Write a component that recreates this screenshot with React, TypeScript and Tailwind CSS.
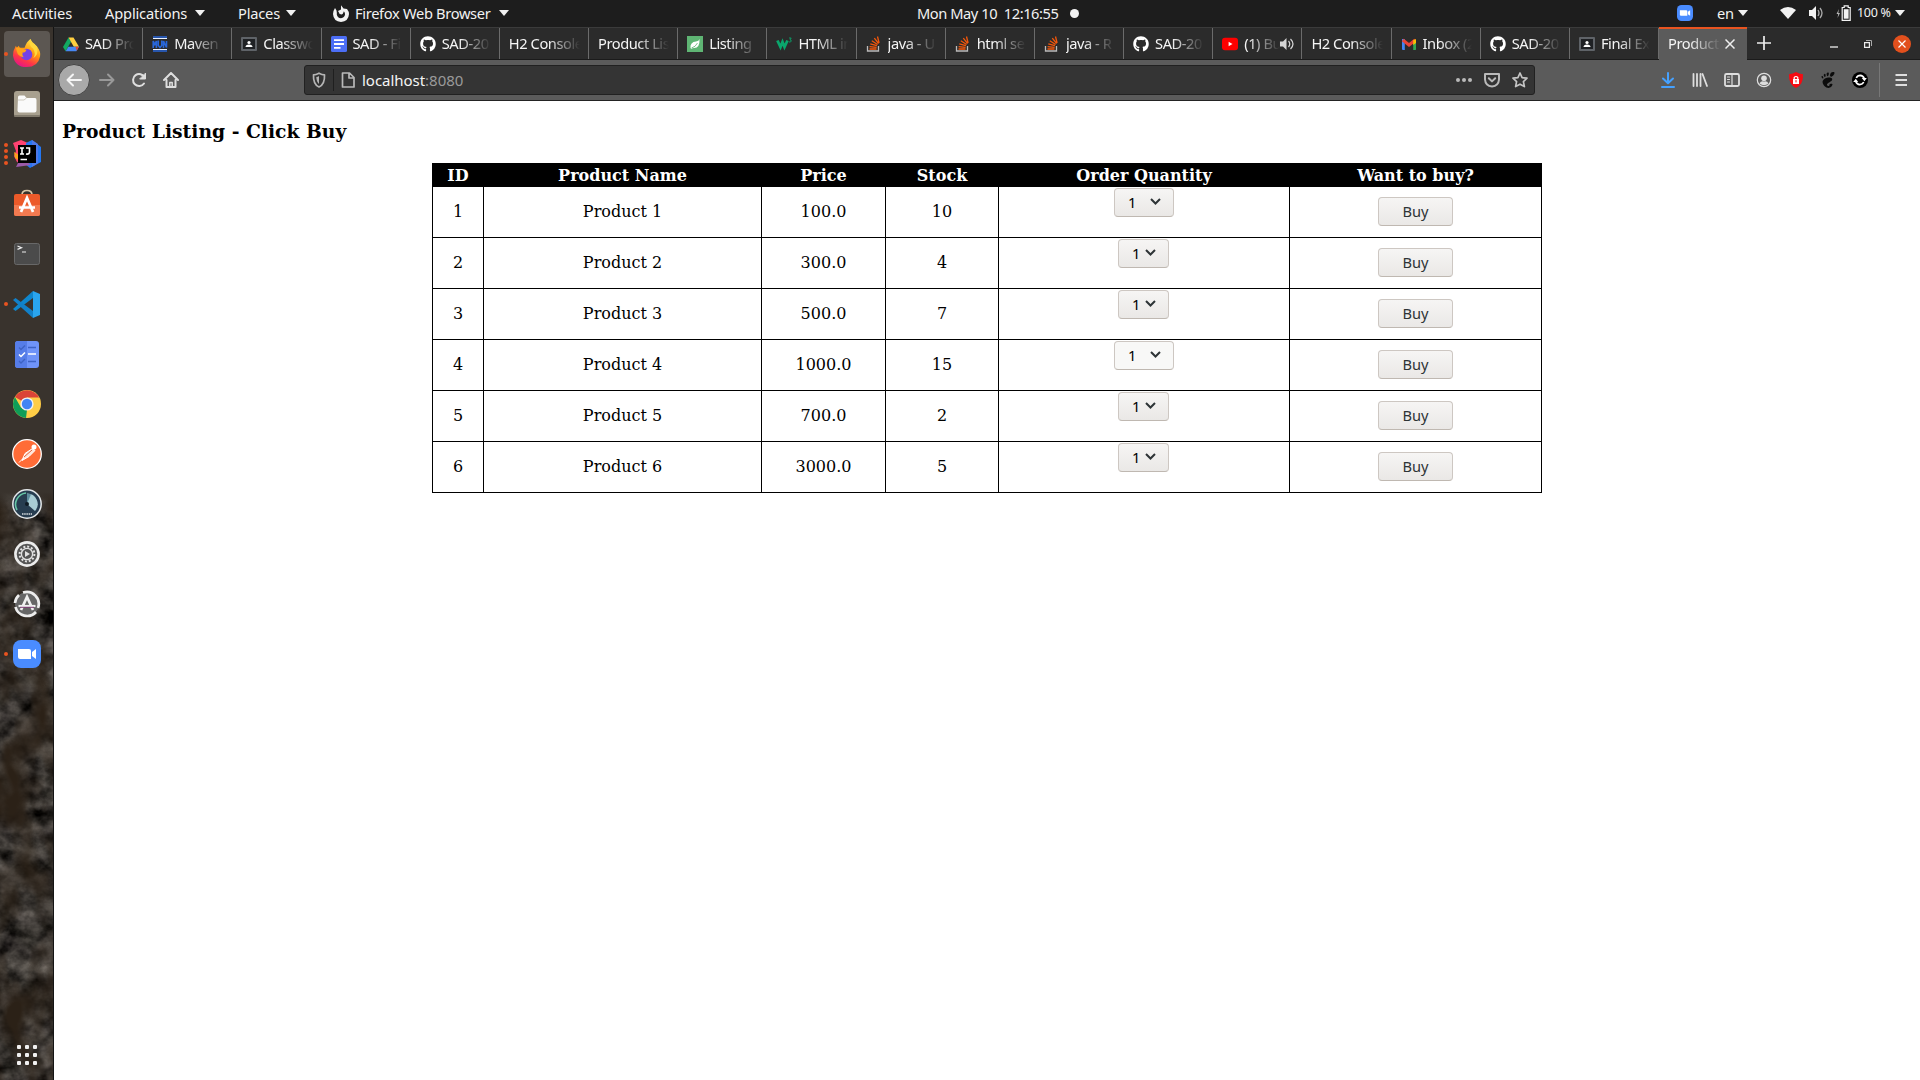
import React from "react";
import { FaGithub } from "react-icons/fa";
import { SiGnome } from "react-icons/si";

type Kids = { children?: React.ReactNode };

const Caret = () => (
  <svg width="10" height="6" viewBox="0 0 10 6" className="shrink-0"><path d="M0 0h10L5 6z" fill="#f2f2f2" /></svg>
);

const ZoomIcon = ({ size }: { size: number }) => (
  <svg width={size} height={size} viewBox="0 0 28 28" className="shrink-0">
    <rect width="28" height="28" rx="8" fill="#4a8cff" />
    <path d="M5 9h11q2 0 2 2v8H7q-2 0-2-2zM19 12l4-3v10l-4-3z" fill="#fff" />
  </svg>
);

function TopBar() {
  return (
    <header className="flex h-[27px] shrink-0 items-center bg-[#1d1d1d] pb-px text-[14.67px] leading-[24px] text-[#f2f2f2] whitespace-nowrap">
      <span className="ml-3 w-[93px] tracking-[-0.1px]">Activities</span>
      <span className="w-[90px] tracking-[-0.17px]">Applications</span>
      <Caret />
      <span className="ml-[33px] w-12 tracking-[-0.2px]">Places</span>
      <Caret />
      <svg width="16" height="17" viewBox="0 0 16 17" className="ml-[37px]">
        <path d="M8 .3l2.500 3.200L14 4q2 2.500 2 5-.5 7.500-8 8Q.5 16.500 0 9q0-3 2-6l1.500 2.500Q4 8 3.800 9.500 4.500 13 8 13.200q3.500-.4 4-3.700.2-2-1.200-3.300L9.500 9 6.500 8.500 5 6l3-1.500z" fill="#f2f2f2" />
        <path d="M7 6l2-2 1.500 3L9 9.500 6.500 9z" fill="#f2f2f2" />
      </svg>
      <span className="ml-[6px] w-36 tracking-[-0.33px]">Firefox Web Browser</span>
      <Caret />
      <span className="ml-[408px] w-[153px] whitespace-pre tracking-[-0.45px]">Mon May 10  12:16:55</span>
      <span className="h-[9px] w-[9px] rounded-full bg-[#f2f2f2]" />
      <span className="ml-auto flex items-center">
        <ZoomIcon size={16} />
        <span className="ml-6 w-[21px] tracking-[-0.2px]">en</span>
        <Caret />
        <svg width="16" height="12" viewBox="0 0 16 12" className="ml-8"><path d="M0 3q8-6 16 0L8 12z" fill="#f2f2f2" /></svg>
        <svg width="15" height="14" viewBox="0 0 15 14" className="ml-[13px]">
          <path d="M0 4h3l4-4v14L3 10H0z" fill="#f2f2f2" />
          <path d="M9 4q2 3 0 6M11 2q4 5 0 10" stroke="#aaa" fill="none" strokeWidth="1.3" />
        </svg>
        <svg width="15" height="16" viewBox="0 0 15 16" className="ml-3">
          <path d="M3 4L.5 9h1.700L1.500 13 4 8H2.300z" fill="#b5b5b5" />
          <path d="M6.200 2.500h2V.8h4v1.700h2v12.800h-8z" fill="none" stroke="#f2f2f2" strokeWidth="1.200" />
          <path d="M7.800 4.200h4.800v9.500H7.800z" fill="#f2f2f2" />
        </svg>
        <span className="ml-[6px] w-[38px] text-[12.5px] tracking-[-0.3px]">100 %</span>
        <Caret />
        <span className="w-[15px]" />
      </span>
    </header>
  );
}

const Drive = () => (
  <svg width="16" height="16" viewBox="0 0 16 16">
    <path d="M5.500 1.500L0 11l2.600 4.200 5.400-9.400z" fill="#11a861" />
    <path d="M5.500 1.500h5l5.500 9.300h-5.200z" fill="#ffcf3f" />
    <path d="M5.300 10.800H16l-2.600 4.400H2.600z" fill="#4688f4" />
    <path d="M12.500 10.800H16l-2.200 4z" fill="#ea4335" />
  </svg>
);
const Mvn = () => (
  <svg width="16" height="16" viewBox="0 0 16 16">
    <path d="M1 2.500h14M1 13.500h14" stroke="#e9f1ff" strokeWidth="1" />
    <path d="M1 1h14M1 15h14" stroke="#2866d8" strokeWidth="1.500" />
    <path d="M1.200 12V5l1.600 3.500L4.400 5v7M6.200 4.500v5L8 11.500l1.800-2v-5M11.500 12V5l3 6.500V5" stroke="#2866d8" strokeWidth="1.600" fill="none" />
  </svg>
);
const Classroom = () => (
  <svg width="16" height="16" viewBox="0 0 16 16">
    <rect y="1" width="16" height="14" rx="1" fill="#5f6368" />
    <rect x="2" y="3" width="12" height="10" fill="#1f2124" />
    <circle cx="8" cy="6.500" r="1.600" fill="#fff" />
    <path d="M4.500 11q0-2.500 3.500-2.500t3.500 2.500z" fill="#fff" />
  </svg>
);
const Docs = () => (
  <svg width="16" height="16" viewBox="0 0 16 16">
    <rect width="16" height="16" rx="1.500" fill="#4c6ef5" />
    <path d="M3 4.200h10M3 8h10M3 11.800h6.500" stroke="#fff" strokeWidth="1.800" />
  </svg>
);
const Leaf = () => (
  <svg width="16" height="16" viewBox="0 0 16 16">
    <rect width="16" height="16" fill="#5fb574" />
    <path d="M12.500 3Q13 12 7 12q-2 0-2.500 1L3.500 12Q3 6 9 5.500 12 5 12.500 3z" fill="#fff" />
    <path d="M4.500 12q4-1 6-5" stroke="#5fb574" fill="none" strokeWidth=".8" />
  </svg>
);
const W3 = () => (
  <svg width="16" height="16" viewBox="0 0 16 16">
    <path d="M1.400 4.500L4.500 11 6.500 6l2 5 3-6.500" fill="none" stroke="#0aa66c" strokeWidth="2.800" />
    <path d="M13 2h2.200l-1.200 1.800q1.500 0 1.200 1.300T13 6" fill="none" stroke="#0aa66c" strokeWidth=".9" />
  </svg>
);
const Stack = () => (
  <svg width="16" height="16" viewBox="0 0 16 16">
    <path d="M1.500 10v5h11v-5" fill="none" stroke="#bcbbbb" strokeWidth="1.300" />
    <path d="M3.500 13h7M3.600 10.600l7 .7M4.300 7.800l6.600 1.900M5.800 4.800l5.800 3.700M8.300 2.200l4.300 5.300M11.500.5l1.600 6.500" stroke="#f4570b" strokeWidth="1.300" />
  </svg>
);
const YouTube = () => (
  <svg width="16" height="16" viewBox="0 0 16 16">
    <rect y="1.800" width="16" height="12.400" rx="3" fill="#f00" />
    <path d="M6.600 5.800v4.500L10.500 8z" fill="#fff" />
  </svg>
);
const Gmail = () => (
  <svg width="16" height="16" viewBox="0 0 16 16">
    <path d="M1 3h2.800v11H1.500L1 13z" fill="#4285f4" />
    <path d="M12.200 4H15v9.500l-.5.500h-2.300z" fill="#34a853" />
    <path d="M1.800 4l6.200 5 6.200-5" stroke="#ea4335" strokeWidth="3" fill="none" />
    <path d="M12.200 4.200L15 3v4l-2.800 2z" fill="#fbbc04" />
  </svg>
);
const Git = () => <FaGithub size={16} color="#fff" />;

const Speaker = () => (
  <svg width="14" height="14" viewBox="0 0 14 14">
    <path d="M0 4.500h3L6.500 1v12L3 9.500H0z" fill="#d5d5d5" />
    <path d="M8.500 4q2.500 3 0 6M10.500 2q5 5 0 10" stroke="#d5d5d5" fill="none" strokeWidth="1.200" />
  </svg>
);

const tabs: { icon?: React.FC; title: string; audio?: boolean }[] = [
  { icon: Drive, title: "SAD Pro" },
  { icon: Mvn, title: "Maven" },
  { icon: Classroom, title: "Classwo" },
  { icon: Docs, title: "SAD - Fi" },
  { icon: Git, title: "SAD-20" },
  { title: "H2 Console" },
  { title: "Product List" },
  { icon: Leaf, title: "Listing" },
  { icon: W3, title: "HTML in" },
  { icon: Stack, title: "java - U" },
  { icon: Stack, title: "html sel" },
  { icon: Stack, title: "java - R" },
  { icon: Git, title: "SAD-20" },
  { icon: YouTube, title: "(1) Bu", audio: true },
  { title: "H2 Console" },
  { icon: Gmail, title: "Inbox (2" },
  { icon: Git, title: "SAD-20" },
  { icon: Classroom, title: "Final Ex" },
];

const fade = "min-w-0 overflow-hidden whitespace-nowrap [mask-image:linear-gradient(to_right,#000_calc(100%_-_32px),transparent)]";

function TabStrip() {
  return (
    <div className="flex h-[33px] shrink-0 items-stretch bg-[#2b2b2b] text-[14.67px] tracking-[-0.45px] text-[#f5f5f5]">
      <div className="flex w-[1605px] shrink-0 border-t border-b border-t-[#3b3b3b] border-b-[#1b1b1b]">
        {tabs.map((t, i) => {
          const Icon = t.icon;
          return (
            <div key={i} className="flex min-w-0 flex-1 basis-0 items-center border-r border-[#6b6b6b] pl-[9px] pr-[8px]">
              {Icon && <span className="mr-[6px] flex h-4 w-4 shrink-0 items-center"><Icon /></span>}
              <span className={`${fade} flex-1 pb-[2px] leading-[28px]`}>{t.title}</span>
              {t.audio && <span className="-mr-px shrink-0"><Speaker /></span>}
            </div>
          );
        })}
      </div>
      <div className="flex w-[88px] shrink-0 items-center border-t-2 border-[#e95420] bg-[#5b5b5b] pb-px pl-[9px]">
        <span className={`${fade} w-[53px] pb-[2px] leading-[28px]`}>Product L</span>
        <svg width="10" height="10" viewBox="0 0 10 10" className="ml-[4px]"><path d="M.5.5l9 9M9.500.5l-9 9" stroke="#eee" strokeWidth="1.500" /></svg>
      </div>
      <div className="flex flex-1 items-center border-t border-b border-t-[#3b3b3b] border-b-[#1b1b1b]">
        <svg width="14" height="14" viewBox="0 0 14 14" className="ml-[10px] -mt-px"><path d="M7 0v14M0 7h14" stroke="#eee" strokeWidth="1.700" /></svg>
        <svg width="8" height="8" viewBox="0 0 8 8" className="ml-[59px]"><path d="M0 7h8" stroke="#eee" strokeWidth="1.300" /></svg>
        <svg width="8" height="8" viewBox="0 0 8 8" className="ml-[26px]">
          <path d="M.6 2.600h4.800v4.800H.6z" fill="none" stroke="#eee" strokeWidth="1.200" /><path d="M2 .5h5.500V6" fill="none" stroke="#aaa" />
        </svg>
        <span className="ml-[21px] flex h-[18px] w-[18px] items-center justify-center rounded-full bg-[#e2501d]">
          <svg width="8" height="8" viewBox="0 0 8 8"><path d="M.5.5l7 7M7.500.5l-7 7" stroke="#fff" strokeWidth="1.200" /></svg>
        </span>
      </div>
    </div>
  );
}

const Slot = ({ children }: Kids) => <span className="flex w-8 shrink-0 items-center justify-center">{children}</span>;

const Ico = ({ children, color = "#dedede" }: Kids & { color?: string }) => (
  <svg width="16" height="16" viewBox="0 0 16 16" fill="none" stroke={color} strokeWidth="2" strokeLinecap="round" strokeLinejoin="round" className="shrink-0">
    {children}
  </svg>
);

function NavBar() {
  return (
    <div className="flex h-[41px] shrink-0 items-center border-b border-[#232323] bg-[#5b5b5b]">
      <span className="ml-1 mr-px flex h-8 w-8 shrink-0 items-center justify-center rounded-full border border-[#444] bg-[#a9a9a9]">
        <Ico color="#f5f5f5"><path d="M15 8H1.500M7 2.500L1.500 8 7 13.500" /></Ico>
      </span>
      <Slot><Ico color="#999"><path d="M1 8h13.500M9 2.500L14.500 8 9 13.500" /></Ico></Slot>
      <Slot><Ico><path d="M13 11.500A6 6 0 1 1 13.500 5.500" /><path d="M14.500 1.500V7H9z" fill="#dedede" strokeWidth="1" /></Ico></Slot>
      <Slot><Ico><path d="M1 8l7-7 7 7M3.500 8v7h9V8" /><path d="M6.800 14.500v-4h2.400v4" strokeWidth="1.500" /></Ico></Slot>
      <div className="ml-[117px] flex h-[30px] w-[1231px] shrink-0 items-center rounded-[3px] border border-[#212121] bg-[#343434]">
        <span className="ml-[6px]"><Ico color="#b5b5b5"><path d="M8 1.200Q5 2.800 2.500 2.800 2 12.500 8 15 14 12.500 13.500 2.800 11 2.800 8 1.200z" strokeWidth="1.700" /><path d="M8 4v8Q5.500 10 5.300 5 7 5 8 4z" fill="#b5b5b5" stroke="none" /></Ico></span>
        <span className="ml-[6px] h-[22px] w-px bg-[#1f1f1f]" />
        <span className="ml-[6px]"><Ico color="#b9b9b9"><path d="M2.500 1h7L14 5.500V15H2.500zM9 1v5h5" strokeWidth="1.700" /></Ico></span>
        <span className="ml-[6px] text-[15px] leading-[26px] tracking-[-0.03px] text-[#f5f5f5]">localhost<span className="text-[#9a9a9a]">:8080</span></span>
        <span className="ml-auto flex items-center gap-3 pr-[6px]">
          <Ico color="#b9b9b9"><g fill="#b9b9b9" stroke="none"><circle cx="2" cy="8" r="2" /><circle cx="8" cy="8" r="2" /><circle cx="14" cy="8" r="2" /></g></Ico>
          <Ico color="#b9b9b9"><path d="M1 2h14v5.500Q14.500 14 8 14.500 1.500 14 1 7.500zM4.800 6.200L8 9.400l3.200-3.200" /></Ico>
          <Ico color="#c5c5c5"><path d="M8 1l2.100 4.600 4.900.6-3.600 3.400 1 5L8 12.200l-4.400 2.400 1-5L1 6.200l4.900-.6z" strokeWidth="1.700" /></Ico>
        </span>
      </div>
      <span className="flex-1" />
      <Slot><Ico color="#45a1ff"><path d="M8 1v10M3 6.500L8 11.300l5-4.800M2 15h12" /></Ico></Slot>
      <Slot><Ico><path d="M1.500 2v12M5 2v12M8.500 2v12M10.500 2l4.500 12" strokeWidth="1.800" /></Ico></Slot>
      <Slot><Ico><rect x="1" y="2" width="14" height="12" rx="1.500" strokeWidth="1.800" /><path d="M8 2v12M3.500 5h2M3.500 7.500h2M3.500 10h2" strokeWidth="1.200" /></Ico></Slot>
      <Slot><Ico><circle cx="8" cy="8" r="6.700" strokeWidth="1.200" /><circle cx="8" cy="6.300" r="2.800" fill="#dedede" stroke="none" /><path d="M3.500 11.500Q5 8.500 8 9.500q3-1 4.500 2Q8 15 3.500 11.500z" fill="#dedede" stroke="none" /></Ico></Slot>
      <Slot><Ico><path d="M8 0Q11 2 15 2.200 15.500 12.500 8 16 .5 12.500 1 2.200 5 2 8 0z" fill="#f50b12" stroke="none" /><rect x="5" y="7" width="6" height="5" fill="#fff" stroke="none" /><path d="M6.200 7V5.500q1.800-2 3.600 0V7" stroke="#fff" strokeWidth="1.200" /><path d="M8 8.500v1.500" stroke="#f50b12" strokeWidth="1" /></Ico></Slot>
      <Slot><SiGnome size={16} color="#0c0c0c" /></Slot>
      <Slot><Ico color="#fff"><circle cx="8" cy="8" r="8" fill="#000" stroke="none" /><path d="M4.300 6Q5.500 3.400 8.300 3.400q2.700.1 3.900 3M11.700 10Q10.500 12.600 7.700 12.600 5 12.500 3.800 9.600" strokeWidth="1.600" strokeLinecap="butt" /><path d="M9.800 6h5l-2.400 3.200zM1.200 10h5L3.800 6.800z" fill="#fff" stroke="none" /></Ico></Slot>
      <span className="ml-[3px] h-[34px] w-px bg-[#777]" />
      <span className="ml-[13px] mr-[11px]"><Ico><path d="M2.500 3h11.500M2.500 8h11.500M2.500 13h11.500" strokeLinecap="butt" /></Ico></span>
    </div>
  );
}

const FirefoxLogo = () => (
  <svg width="29" height="29" viewBox="0 0 30 30">
    <defs>
      <linearGradient id="ff" x1=".8" y1="0" x2=".3" y2="1"><stop offset="0" stopColor="#fff44f" /><stop offset=".45" stopColor="#ff980e" /><stop offset=".75" stopColor="#ff3647" /><stop offset="1" stopColor="#e31587" /></linearGradient>
    </defs>
    <path d="M19 0q2 4 5 6l2 2q4 5 3 10-2 11-14 11T1 17q0-5 3-10l1 2 2-2 1 2h5Q15 3 19 0z" fill="url(#ff)" />
    <circle cx="15" cy="16" r="6" fill="#7542e5" />
    <path d="M4 9q4-1 6 1l5 1q-1 3-4 3-1 3 1 5-6-1-7-6z" fill="#ffa41a" />
    <path d="M19 0q-3 6 3 10 3 5 0 10 6-4 4-12l-3-3Q20 4 19 0z" fill="#ffd83d" />
  </svg>
);
const Files = () => (
  <svg width="26" height="26" viewBox="0 0 26 26"><rect width="26" height="26" rx="3" fill="#a8a08f" /><rect y="24" width="26" height="2" rx="1" fill="#817a6c" /><path d="M4 6q0-1.500 1.500-1.500h5l2 2.500H21q1.500 0 1.500 2v10.500q0 2-2 2h-15q-2 0-2-2z" fill="#fafafa" /><path d="M4 9h6l2.500-2" stroke="#d0ccc2" fill="none" /></svg>
);
const IntelliJ = () => (
  <svg width="28" height="28" viewBox="0 0 28 28">
    <path d="M0 3L8 0l7 3 3 12-9 9-5-2-3-6 2-5z" fill="#ff4271" /><path d="M1 12l5 3 1 6-5-3z" fill="#f9a11c" />
    <path d="M13 3l6-3 9 7v15l-11 6-5-4z" fill="#2477f2" /><path d="M19 0l6 4v19l-6 4z" fill="#4d78e8" /><path d="M3 27l5-10 10 8z" fill="#9b5aa8" />
    <rect x="5" y="5" width="18" height="18" fill="#000" />
    <path d="M7 8h4M9 8v6M7 14h4M13 8h3.500v4.500q-.5 2-3.500 1.500M7.500 19.500h6.500" stroke="#fff" strokeWidth="1.600" fill="none" />
  </svg>
);
const Store = () => (
  <svg width="28" height="28" viewBox="0 0 28 28" className="-mt-[3px]">
    <path d="M9 6q0-4.500 5-4.500T19 6" stroke="#d9c6a6" strokeWidth="1.700" fill="none" /><rect x="1" y="5" width="26" height="22" rx="2" fill="#ec5a29" /><path d="M1 16h26v9q0 2-2 2H3q-2 0-2-2z" fill="#f27a50" />
    <path d="M8 23l6-14 6 14M6 18.500h16" stroke="#fff" strokeWidth="2.700" fill="none" />
  </svg>
);
const Terminal = () => (
  <svg width="26" height="22" viewBox="0 0 26 22"><rect x=".5" y=".5" width="25" height="21" rx="2" fill="#4b4b4b" stroke="#686868" /><path d="M3.500 3l4 1.700-4 1.700M8 9h4" stroke="#eee" fill="none" strokeWidth="1.200" /></svg>
);
const VsCode = () => (
  <svg width="27" height="27" viewBox="0 0 27 27"><path d="M0 18l2.500 2L20 7V0z" fill="#0f86cc" /><path d="M20 0l7 3v21l-7 3z" fill="#2aa5ee" /><path d="M0 9l2.500-2L20 20v7z" fill="#1280c8" /></svg>
);
const Todo = () => (
  <svg width="24" height="27" viewBox="0 0 24 27"><rect width="24" height="27" rx="3" fill="#6f93f8" /><path d="M3 0h9v27H3q-3 0-3-3V3q0-3 3-3z" fill="#567de8" /><path d="M4 6.500l2 2 4-4M13 6.500h8M4 20l2 2 4-4M13 20.500h8" stroke="#3d62c4" strokeWidth="1.300" fill="none" /><path d="M4 13.500l2 2 4-4M13 13h8" stroke="#fff" strokeWidth="1.500" fill="none" /></svg>
);
const Chrome = () => (
  <svg width="28" height="28" viewBox="0 0 28 28"><circle cx="14" cy="14" r="14" fill="#ffcd46" /><path d="M14 14L1.900 7A14 14 0 0 1 26.100 7.500H14z" fill="#db4437" /><path d="M1.900 7l6 10.500L14 20l-1 8A14 14 0 0 1 1.900 7z" fill="#0f9d58" /><circle cx="14" cy="14" r="6.600" fill="#f1f1f1" /><circle cx="14" cy="14" r="5.200" fill="#4285f4" /></svg>
);
const Postman = () => (
  <svg width="30" height="30" viewBox="0 0 30 30"><circle cx="15" cy="15" r="14.300" fill="#ff6c37" stroke="#fff" strokeWidth="1.300" /><circle cx="22" cy="8" r="2.500" fill="#fff" /><path d="M20.500 9.500l2.500 2-6 6-7 4 3-7zM7 23.500l4-4" stroke="#fff" fill="#ffe3d8" strokeWidth="1" /><path d="M12 18l8-7" stroke="#e0623a" /></svg>
);
const Gauge = () => (
  <svg width="30" height="30" viewBox="0 0 30 30"><circle cx="15" cy="15" r="14.200" fill="#273d50" stroke="#e4e8ea" strokeWidth="1.500" /><path d="M5 21A11.500 11.500 0 0 1 14 4" stroke="#66c5a5" strokeWidth="1.600" fill="none" /><path d="M15 15V4.500A10.500 10.500 0 0 1 23 22z" fill="#a9cdd4" /><path d="M15 15V4.500l4 .8z" fill="#5c8c9c" /><circle cx="15" cy="15" r="2" fill="#0e1a24" /><path d="M10 25h10" stroke="#d5dadd" strokeWidth="1.300" strokeDasharray="1.500 .7" /></svg>
);
const Gear = () => (
  <svg width="26" height="26" viewBox="0 0 26 26"><circle cx="13" cy="13" r="11.600" fill="#555" stroke="#ececec" strokeWidth="2.600" /><circle cx="13" cy="13" r="7.400" stroke="#e2e2e2" strokeWidth="2" strokeDasharray="2 1.870" fill="none" /><circle cx="13" cy="13" r="5.600" stroke="#e2e2e2" strokeWidth="1.400" fill="none" /><path d="M11 10l5 3-5 3z" fill="#e2e2e2" /></svg>
);
const Updater = () => (
  <svg width="28" height="28" viewBox="0 0 28 28"><circle cx="14" cy="14" r="12" fill="#666" /><path d="M10 2.500A12 12 0 0 1 25 18M23 22A12 12 0 0 1 2.500 17M2 13A12 12 0 0 1 6 5" stroke="#ededed" strokeWidth="2.700" fill="none" /><path d="M8 20l6-13 6 13" stroke="#f0f0f0" strokeWidth="2.700" fill="none" /><path d="M5.500 16h17" stroke="#f0f0f0" strokeWidth="2.200" /><path d="M7 17.300h14" stroke="#7d3a72" /></svg>
);

const launchers: { icon: React.ReactNode; dots?: number }[] = [
  { icon: <FirefoxLogo />, dots: 1 },
  { icon: <Files /> },
  { icon: <IntelliJ />, dots: 4 },
  { icon: <Store /> },
  { icon: <Terminal /> },
  { icon: <VsCode />, dots: 1 },
  { icon: <Todo /> },
  { icon: <Chrome /> },
  { icon: <Postman /> },
  { icon: <Gauge /> },
  { icon: <Gear /> },
  { icon: <Updater /> },
  { icon: <ZoomIcon size={28} />, dots: 1 },
];

function Dock() {
  return (
    <aside className="relative flex w-[54px] shrink-0 flex-col overflow-hidden border-r border-[#141414] bg-[#39332d] pt-[2px]">
      <svg width="54" height="588" className="absolute bottom-0 left-0">
        <defs>
          <filter id="rock" x="0" y="0" width="100%" height="100%" colorInterpolationFilters="sRGB">
            <feTurbulence type="fractalNoise" baseFrequency=".05 .06" numOctaves="4" seed="8" />
            <feColorMatrix values=".55 .3 0 0 -.2  .53 .28 0 0 -.195  .5 .28 0 0 -.195  0 0 0 0 1" />
          </filter>
          <filter id="moss" x="0" y="0" width="100%" height="100%" colorInterpolationFilters="sRGB">
            <feTurbulence type="fractalNoise" baseFrequency=".03 .015" numOctaves="3" seed="21" />
            <feColorMatrix values="0 0 0 0 .17  0 0 0 0 .13  0 0 0 0 .09  3 0 0 0 -1.2" />
          </filter>
          <linearGradient id="shade" x1="0" y1="0" x2="0" y2="1">
            <stop offset="0" stopColor="#39332d" /><stop offset=".03" stopColor="#39332d" stopOpacity="0" />
          </linearGradient>
        </defs>
        <rect width="54" height="588" filter="url(#rock)" />
        <rect width="54" height="588" filter="url(#moss)" />
        <rect width="54" height="588" fill="url(#shade)" />
      </svg>
      {launchers.map((l, i) => (
        <div key={i} className="relative flex h-[50px] shrink-0 items-center justify-center">
          <span className={i === 0 ? "flex h-[46px] w-[46px] items-center justify-center rounded-[4px] bg-[#5c5752] pb-[2px]" : "flex h-[46px] w-[46px] items-center justify-center"}>{l.icon}</span>
          {l.dots && (
            <span className="absolute left-1 top-0 flex h-full flex-col items-center justify-center gap-[2px]">
              {Array.from({ length: l.dots }, (_, k) => <span key={k} className="h-1 w-1 rounded-full bg-[#e95420]" />)}
            </span>
          )}
        </div>
      ))}
      <div className="relative mt-auto mb-[15px] ml-[17px] grid w-5 grid-cols-3 gap-[4px]">
        {Array.from({ length: 9 }, (_, k) => <span key={k} className="h-1 w-1 rounded-[1px] bg-[#f0f0f0]" />)}
      </div>
    </aside>
  );
}

const products = [
  { id: 1, price: "100.0", stock: 10 },
  { id: 2, price: "300.0", stock: 4 },
  { id: 3, price: "500.0", stock: 7 },
  { id: 4, price: "1000.0", stock: 15 },
  { id: 5, price: "700.0", stock: 2 },
  { id: 6, price: "3000.0", stock: 5 },
];

const cols = "grid grid-cols-[51px_278px_124px_113px_291px_252px]";
const cell = "flex items-center justify-center border-r border-b border-black";

function Page() {
  return (
    <main className="flex-1 bg-white font-['DejaVu_Serif',serif] text-base text-black">
      <h3 className="ml-2 pt-[19px] text-[18.72px] font-bold leading-[22px] tracking-[0.02px]">Product Listing - Click Buy</h3>
      <div className="ml-[378px] mt-[21px] w-[1110px] border-l border-black">
        <div className={`${cols} h-6 bg-black pr-px text-center font-bold leading-[26px] text-white`}>
          {["ID", "Product Name", "Price", "Stock", "Order Quantity", "Want to buy?"].map((h) => <span key={h} className="pr-px">{h}</span>)}
        </div>
        {products.map((p) => (
          <div key={p.id} className={`${cols} h-[51px]`}>
            <span className={cell}>{p.id}</span>
            <span className={cell}>Product {p.id}</span>
            <span className={cell}>{p.price}</span>
            <span className={cell}>{p.stock}</span>
            <span className="flex items-start justify-center border-r border-b border-black pt-px">
              <button
                className={`flex h-[29px] items-center rounded-[4px] border border-[#cdc7c2] border-b-[#bfb8b1] pb-px pl-[13px] font-['Noto_Sans',sans-serif] text-[14.67px] ${p.stock > 9 ? "w-[60px] gap-[14px]" : "mr-px w-[51px] gap-[5px]"} ${p.id === 4 ? "bg-[#f8f8f7]" : "bg-linear-to-b from-[#f6f5f4] to-[#eae8e6]"}`}
              >
                <span>1</span>
                <svg width="11" height="8" viewBox="0 0 11 8"><path d="M1 1l4.500 4.500L10 1" fill="none" stroke="#2e3436" strokeWidth="2" /></svg>
              </button>
            </span>
            <span className="flex items-start justify-center border-r border-b border-black pt-[10px]">
              <button className="h-[29px] w-[75px] rounded-[4px] border border-[#cdc7c2] border-b-[#bfb8b1] bg-linear-to-b from-[#f6f5f4] to-[#eae8e6] font-['Noto_Sans',sans-serif] text-[14.67px] leading-[27px] text-[#2e3436]">
                Buy
              </button>
            </span>
          </div>
        ))}
      </div>
    </main>
  );
}

export default function App() {
  return (
    <div className="flex h-[1080px] w-[1920px] flex-col overflow-hidden bg-white font-['Noto_Sans',sans-serif]">
      <TopBar />
      <div className="flex min-h-0 flex-1">
        <Dock />
        <div className="flex min-w-0 flex-1 flex-col">
          <TabStrip />
          <NavBar />
          <Page />
        </div>
      </div>
    </div>
  );
}
